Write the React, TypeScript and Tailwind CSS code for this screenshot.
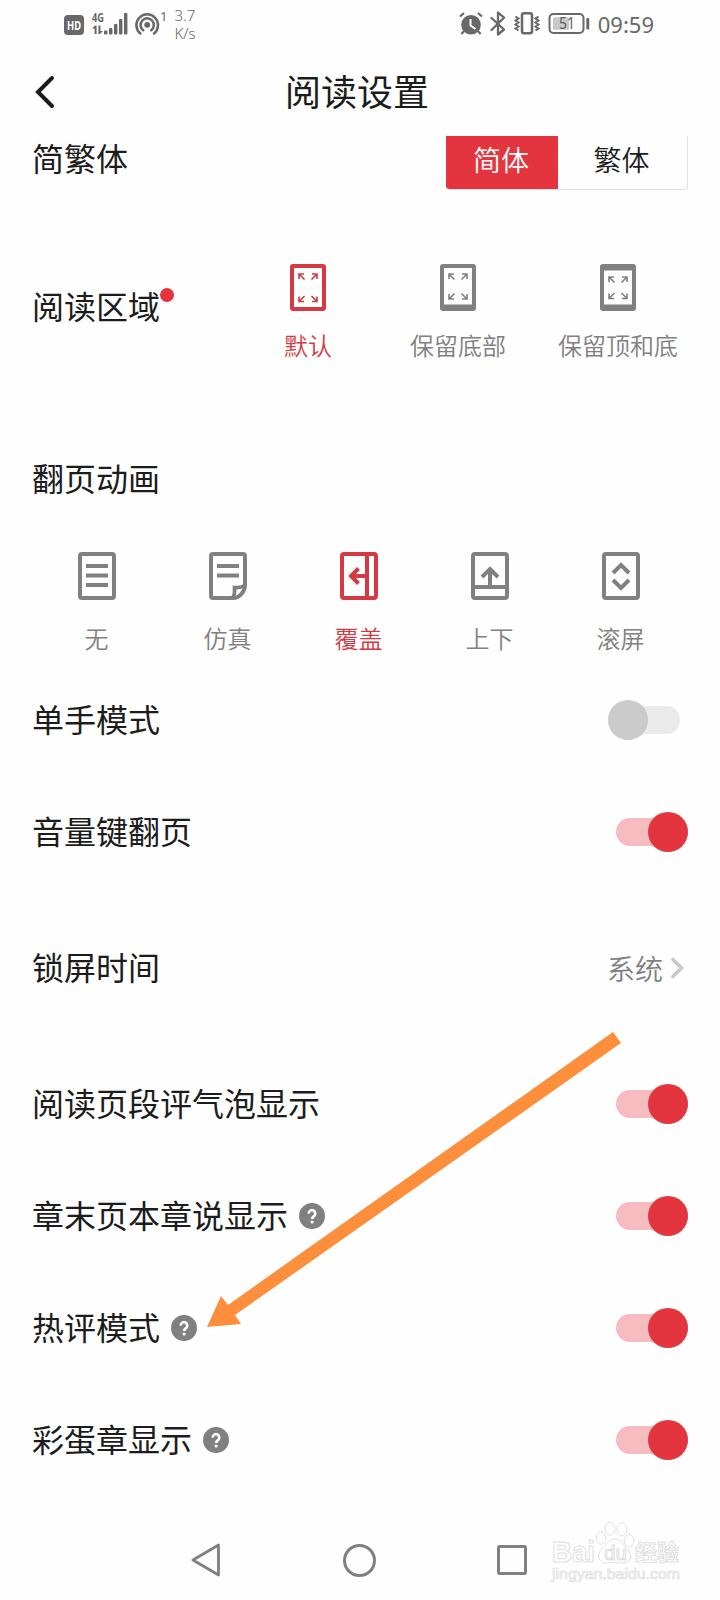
import type { ReactNode } from "react";

const RED = "#d43a43";
const GRAY = "#808080";

function StatusBar() {
  return (
    <div className="flex h-12 shrink-0 items-center pl-16 pr-[64px] font-['Noto_Sans','Noto_Sans_CJK_SC',sans-serif] text-[#686868]">
      <svg width="20" height="20" viewBox="0 0 20 20" className="mt-[2px]">
        <rect width="20" height="20" rx="4" fill="#686868" />
        <text x="10" y="14.5" textAnchor="middle" fontSize="12" fontWeight="700" fill="#fff" textLength="14" lengthAdjust="spacingAndGlyphs">HD</text>
      </svg>
      <svg width="36" height="34" viewBox="0 -5 36 34" className="ml-2" fill="#686868">
        <text x="0" y="9.6" fontSize="12.500" fontWeight="700" textLength="12" lengthAdjust="spacingAndGlyphs">4G</text>
        <path d="M0 16.500l3-3h1.600V22H2.600v-5.500zM6.400 13.500h2V19H11l-3 3H6.400z" />
        <rect x="12" y="18.500" width="3.400" height="4" rx="1" />
        <rect x="17" y="16" width="3.400" height="6.500" rx="1" />
        <rect x="22" y="12" width="3.400" height="10.500" rx="1" />
        <rect x="27" y="7" width="3.400" height="15.500" rx="1" />
        <rect x="32" y="1" width="3.400" height="21.500" rx="1" />
      </svg>
      <svg width="26" height="24" viewBox="0 0 26 24" className="ml-[6px]" fill="none" stroke="#686868" strokeWidth="2.500" strokeLinecap="round">
        <path d="M6.400 21.500a10.800 10.800 0 1 1 13.600 0" />
        <path d="M9.200 18.200a6.600 6.600 0 1 1 8 0" />
        <circle cx="13.200" cy="12.800" r="2.900" fill="#686868" stroke="none" />
      </svg>
      <span className="-mt-4 text-[13px] leading-4">1</span>
      <div className="-mt-px ml-[7px] text-[15px] font-light leading-[18px]">
        <div>3.7</div>
        <div>K/s</div>
      </div>
      <svg width="132" height="26" viewBox="0 0 132 26" className="ml-auto mr-[8px]" fill="none" stroke="#686868">
        {/* alarm */}
        <circle cx="13" cy="13.800" r="9.800" fill="#686868" stroke="none" />
        <path d="M2 5.500l4-3.500M24 5.500l-4-3.500M6 20l-2.600 3M20 20l2.600 3" strokeWidth="2.200" />
        <path d="M12.500 8v6.500l5 3.500" stroke="#fff" strokeWidth="2" />
        {/* bluetooth */}
        <path d="M33.500 7L46 18.500l-6 5V1.500l6 5.200L33.500 19" strokeWidth="2.300" strokeLinejoin="round" strokeLinecap="round" />
        {/* vibrate */}
        <rect x="64" y="2.200" width="10" height="20" rx="2" strokeWidth="2.500" />
        <path d="M57.500 5.500l3 2-3 2 3 2-3 2 3 2-3 2 3 2M80.500 5.500l-3 2 3 2-3 2 3 2-3 2 3 2-3 2" strokeWidth="2" />
        {/* battery */}
        <rect x="91.500" y="3" width="34" height="19" rx="4" strokeWidth="2" />
        <rect x="95" y="6.200" width="16" height="12.600" rx="1.500" fill="#c9c9c9" stroke="none" />
        <rect x="128.300" y="7" width="3" height="11.500" rx="1" fill="#686868" stroke="none" />
        <text x="109" y="18" textAnchor="middle" fontSize="16" fill="#606060" stroke="none" textLength="16" lengthAdjust="spacingAndGlyphs">51</text>
      </svg>
      <span className="mr-[2px] text-[22px] leading-none">09:59</span>
    </div>
  );
}

function Header() {
  return (
    <div className="grid h-[88px] shrink-0 grid-cols-[1fr_auto_1fr] items-center pr-[6px]">
      <svg width="20" height="34" viewBox="0 0 20 34" className="ml-[35px]" fill="none" stroke="#1c1c1c" strokeWidth="4">
        <path d="M17 3L3 17l14 14" strokeLinecap="round" />
      </svg>
      <h1 className="pb-[5px] text-[36px] leading-none">阅读设置</h1>
    </div>
  );
}

type AreaKind = "full" | "bottom" | "both";

function AreaIcon({ kind, color }: { kind: AreaKind; color: string }) {
  const top = kind === "both" ? 6.5 : 4;
  const bottom = kind === "full" ? 43 : 40.5;
  const a1 = kind === "both" ? 13 : 10;
  const a2 = kind === "full" ? 37.5 : kind === "bottom" ? 35 : 34.5;
  return (
    <svg width="36" height="47" viewBox="0 0 36 47" fill="none">
      <path
        fill={color}
        fillRule="evenodd"
        d={`M3 0h30a3 3 0 0 1 3 3v41a3 3 0 0 1-3 3H3a3 3 0 0 1-3-3V3a3 3 0 0 1 3-3zM4 ${top}V${bottom}H32V${top}z`}
      />
      <g stroke={color} strokeWidth="1.600">
        <path d={`M14 ${a1}H9v5M9 ${a1}l5.500 5.500M22 ${a1}h5v5M27 ${a1}l-5.500 5.500`} />
        <path d={`M14 ${a2}H9v-5M9 ${a2}l5.500-5.500M22 ${a2}h5v-5M27 ${a2}l-5.500-5.500`} />
      </g>
    </svg>
  );
}

const pageIcons: Record<string, ReactNode> = {
  none: (
    <>
      <rect x="2" y="2" width="34" height="44" rx="2" />
      <path d="M8 14h22M8 23.500h22M8 33h22" />
    </>
  ),
  paper: (
    <>
      <path d="M24 46H4a2 2 0 0 1-2-2V4a2 2 0 0 1 2-2h30a2 2 0 0 1 2 2v29c0 6-5 13-12 13z" />
      <path d="M8 14h22M8 23.500h22" />
      <path d="M24 45.500c1.500-3 2-6 1.500-10 4 .5 7 0 10-2" strokeWidth="3.600" />
    </>
  ),
  cover: (
    <>
      <rect x="2" y="2" width="34" height="44" rx="2" />
      <path d="M27 2v44M26 24H11" />
      <path d="M18.500 16.500L11 24l7.500 7.500" />
    </>
  ),
  vertical: (
    <>
      <rect x="2" y="2" width="34" height="44" rx="2" />
      <path d="M2 35h34M19 35V18" />
      <path d="M11 25l8-8 8 8" />
    </>
  ),
  scroll: (
    <>
      <rect x="2" y="2" width="34" height="44" rx="2" />
      <path d="M11 21l8-8 8 8M11 28l8 8 8-8" />
    </>
  ),
};

const areas: { kind: AreaKind; label: string; width: string }[] = [
  { kind: "full", label: "默认", width: "w-[140px]" },
  { kind: "bottom", label: "保留底部", width: "w-[160px]" },
  { kind: "both", label: "保留顶和底", width: "w-[160px]" },
];

const animations = [
  { icon: "none", label: "无" },
  { icon: "paper", label: "仿真" },
  { icon: "cover", label: "覆盖" },
  { icon: "vertical", label: "上下" },
  { icon: "scroll", label: "滚屏" },
];

function Toggle({ on }: { on: boolean }) {
  return on ? (
    <div className="flex h-7 w-[72px] items-center justify-end rounded-full bg-[#f6bcc0]">
      <div className="size-10 shrink-0 rounded-full bg-[#e4353f]" />
    </div>
  ) : (
    <div className="mr-2 flex h-7 w-[72px] items-center rounded-full bg-[#eaeaea]">
      <div className="size-10 shrink-0 rounded-full bg-[#cbcbcb]" />
    </div>
  );
}

function HelpBadge() {
  return (
    <svg width="26" height="26" viewBox="0 0 26 26" className="ml-[11px]" fill="none">
      <circle cx="13" cy="13" r="13" fill={GRAY} />
      <path d="M9.700 10.600a3.300 3.300 0 1 1 5.300 2.500c-1.300.9-1.900 1.500-1.900 3" stroke="#fff" strokeWidth="2.600" />
      <circle cx="13.100" cy="19" r="1.600" fill="#fff" />
    </svg>
  );
}

interface RowProps {
  label: string;
  help?: boolean;
  tall?: boolean;
  children: ReactNode;
}

function Row({ label, help, tall, children }: RowProps) {
  return (
    <div className={`flex shrink-0 items-center pl-8 pr-8 ${tall ? "h-40" : "h-28"}`}>
      <span className="pb-[5px] text-[32px] leading-none">{label}</span>
      {help && <HelpBadge />}
      <div className="ml-auto">{children}</div>
    </div>
  );
}

function Watermark() {
  return (
    <svg
      width="136"
      height="70"
      viewBox="0 0 136 70"
      className="absolute right-[36px] top-[1518px]"
      fill="#fff"
      stroke="#e0e0e0"
      strokeWidth="1"
      fontFamily="'Liberation Sans', 'Noto Sans CJK SC', sans-serif"
    >
      <text x="4" y="44" fontSize="29" fontWeight="700" textLength="43" lengthAdjust="spacingAndGlyphs">Bai</text>
      <ellipse cx="53" cy="20" rx="4.800" ry="6.200" />
      <ellipse cx="62" cy="10.700" rx="5" ry="6.500" />
      <ellipse cx="74" cy="11.300" rx="5" ry="6.500" />
      <ellipse cx="81" cy="22.700" rx="4.800" ry="6.200" />
      <path d="M67 21c6 0 8 6 12 10 6 5 5 14-4 14-4 0-12-1-16 0-9 0-11-9-5-14 4-4 7-10 13-10z" />
      <text x="56" y="42" fontSize="20" textLength="23" lengthAdjust="spacingAndGlyphs">du</text>
      <text x="87" y="42" fontSize="22" fontWeight="700" textLength="44" lengthAdjust="spacingAndGlyphs">经验</text>
      <text x="4" y="61" fontSize="14" strokeWidth="0.700" textLength="128" lengthAdjust="spacingAndGlyphs">jingyan.baidu.com</text>
    </svg>
  );
}

export default function App() {
  return (
    <div className="relative flex h-[1600px] w-[720px] flex-col overflow-hidden bg-[#fefefe] font-['Noto_Sans_CJK_SC',sans-serif] text-[#1c1c1c]">
      <StatusBar />
      <Header />

      <div className="flex h-[54px] shrink-0 items-start justify-between px-8">
        <span className="mt-[5px] text-[32px] leading-none">简繁体</span>
        <div className="flex h-[54px] w-[242px] overflow-hidden rounded-b border-b border-r border-[#e0e0e0] text-[28px] font-[350] leading-none">
          <div className="-mb-px flex w-[112px] justify-center bg-[#e4353f] pr-[2px] pt-[9px] text-white">简体</div>
          <div className="flex flex-1 justify-center pr-[2px] pt-[9px]">繁体</div>
        </div>
      </div>

      <div className="flex h-[234px] shrink-0 items-start pl-8 pt-[74px]">
        <div className="mt-[25px] flex w-[206px] items-start text-[32px] leading-none">
          阅读区域
          <span className="-mt-px size-[14px] rounded-full bg-[#e4353f]" />
        </div>
        {areas.map(({ kind, label, width }) => (
          <div
            key={kind}
            className={`flex flex-col items-center ${width} ${kind === "full" ? "text-[#d43a43]" : "text-[#808080]"}`}
          >
            <AreaIcon kind={kind} color={kind === "full" ? RED : GRAY} />
            <span className="mt-[22px] whitespace-nowrap text-[24px] font-[350] leading-none">{label}</span>
          </div>
        ))}
      </div>

      <div className="flex h-[110px] shrink-0 items-center px-8 pb-[4px] text-[32px] leading-none">翻页动画</div>

      <div className="flex h-[130px] shrink-0 items-start pl-[31px] pt-[18px]">
        {animations.map(({ icon, label }) => (
          <div
            key={icon}
            className={`flex w-[131px] shrink-0 flex-col items-center ${icon === "cover" ? "text-[#d43a43]" : "text-[#808080]"}`}
          >
            <svg width="38" height="48" viewBox="0 0 38 48" fill="none" stroke="currentColor" strokeWidth="4">
              {pageIcons[icon]}
            </svg>
            <span className="mt-[26px] text-[24px] font-[350] leading-none">{label}</span>
          </div>
        ))}
      </div>

      <Row label="单手模式">
        <Toggle on={false} />
      </Row>
      <Row label="音量键翻页">
        <Toggle on />
      </Row>
      <Row label="锁屏时间" tall>
        <div className="flex items-center gap-[7px] text-[28px] font-[350] leading-none text-[#808080]">
          <span className="pb-[1px]">系统</span>
          <svg width="14" height="22" viewBox="0 0 14 22" className="mr-[4px]" fill="none" stroke="#c8c8c8" strokeWidth="3.600">
            <path d="M3 2.500l8.500 8.500L3 19.500" strokeLinecap="round" />
          </svg>
        </div>
      </Row>
      <Row label="阅读页段评气泡显示">
        <Toggle on />
      </Row>
      <Row label="章末页本章说显示" help>
        <Toggle on />
      </Row>
      <Row label="热评模式" help>
        <Toggle on />
      </Row>
      <Row label="彩蛋章显示" help>
        <Toggle on />
      </Row>

      <div className="flex h-[104px] shrink-0 items-center justify-between pl-[191px] pr-[193px] pt-6">
        <svg width="30" height="34" viewBox="0 0 30 34" fill="none" stroke={GRAY} strokeWidth="2.800" strokeLinejoin="round">
          <path d="M27.500 2v30L2 17z" />
        </svg>
        <div className="size-[33px] rounded-full border-3 border-[#808080]" />
        <div className="size-[30px] rounded-[3px] border-3 border-[#808080]" />
      </div>

      {/* pointer to the hot comment row */}
      <svg width="420" height="300" viewBox="0 0 420 300" className="absolute left-[205px] top-[1030px]">
        <polygon points="2,297 16,266 23,275 408,2 416,13 30,285 36,294" fill="#fd8f3c" />
      </svg>
      <Watermark />
    </div>
  );
}
